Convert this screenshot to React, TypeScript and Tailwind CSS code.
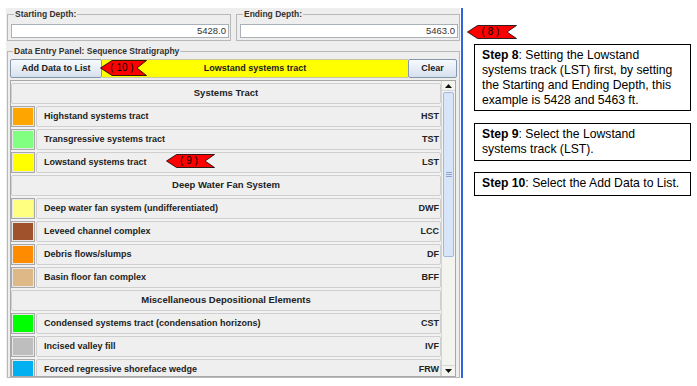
import React from 'react';

type Item = { color: string; name: string; code: string };
type Section = { title: string; items: Item[] };

const SECTIONS: Section[] = [
  {
    title: 'Systems Tract',
    items: [
      { color: '#ffa500', name: 'Highstand systems tract', code: 'HST' },
      { color: '#80ff80', name: 'Transgressive systems tract', code: 'TST' },
      { color: '#ffff00', name: 'Lowstand systems tract', code: 'LST' },
    ],
  },
  {
    title: 'Deep Water Fan System',
    items: [
      { color: '#ffff80', name: 'Deep water fan system (undifferentiated)', code: 'DWF' },
      { color: '#a0522d', name: 'Leveed channel complex', code: 'LCC' },
      { color: '#ff8c00', name: 'Debris flows/slumps', code: 'DF' },
      { color: '#deb887', name: 'Basin floor fan complex', code: 'BFF' },
    ],
  },
  {
    title: 'Miscellaneous Depositional Elements',
    items: [
      { color: '#00ff00', name: 'Condensed systems tract (condensation horizons)', code: 'CST' },
      { color: '#bebebe', name: 'Incised valley fill', code: 'IVF' },
      { color: '#00b0f0', name: 'Forced regressive shoreface wedge', code: 'FRW' },
    ],
  },
];

function RedTag({ label, className, w, h }: { label: string; className: string; w: number; h: number }) {
  const pts = `0.5,${h / 2} ${h * 0.75},0.5 ${w - 0.5},0.5 ${w - 10},${h / 2} ${w - 0.5},${h - 0.5} ${h * 0.75},${h - 0.5}`;
  return (
    <div className={`absolute flex items-center justify-center ${className}`}>
      <svg width={w} height={h} viewBox={`0 0 ${w} ${h}`} className="absolute inset-0">
        <polygon points={pts} fill="#ff0000" stroke="#000" strokeWidth="0.8" />
      </svg>
      <span className="relative pr-[3px] text-[10px] leading-none whitespace-pre text-black">{label}</span>
    </div>
  );
}

function DepthField({ title, value }: { title: string; value: string }) {
  return (
    <fieldset className="w-[224px] border border-[#b8b8b8] pl-[3px] pr-[1px] pt-[5px] pb-[2px]">
      <legend className="ml-[3px] px-[1px] text-[8.5px] leading-[10px] font-bold text-[#333]">{title}</legend>
      <input
        readOnly
        value={value}
        className="block w-full h-[14px] bg-white border border-[#a9b0b8] text-right pr-[2px] text-[9.5px] text-[#333] outline-none"
      />
    </fieldset>
  );
}

function Arrow({ up }: { up?: boolean }) {
  return (
    <svg width="7" height="4" viewBox="0 0 7 4">
      <polygon points={up ? '0,4 3.5,0 7,4' : '0,0 3.5,4 7,0'} fill="#111" />
    </svg>
  );
}

export default function App() {
  return (
    <div className="relative w-[697px] h-[386px] bg-white flex overflow-hidden font-['Liberation_Sans',Arial,sans-serif] text-black">
      {/* swing panel */}
      <div className="ml-[6px] mt-[8px] w-[454px] h-[370px] bg-[#eeeeee] flex flex-col">
        <div className="flex gap-[5px] pl-[1px] mt-[1px]">
          <DepthField title="Starting Depth:" value="5428.0" />
          <DepthField title="Ending Depth:" value="5463.0" />
        </div>

        <fieldset className="mt-[5px] ml-[1px] w-[453px] flex-1 min-h-0 border border-[#b8b8b8] pl-[2px] pr-[1px] pt-[3px] flex flex-col">
          <legend className="ml-[3px] px-[1px] text-[8.5px] leading-[10px] font-bold text-[#333]">
            Data Entry Panel: Sequence Stratigraphy
          </legend>

          <div className="flex h-[19px] text-[9px] font-bold text-[#1a1a1a]">
            <button className="w-[92px] border border-[#8797ab] rounded-[2px] bg-gradient-to-b from-[#f7fafd] to-[#d6e1ee]">
              Add Data to List
            </button>
            <div className="w-[306px] bg-[#ffff00] border-y border-[#c8c8a0] flex items-center justify-center">
              Lowstand systems tract
            </div>
            <button className="w-[49px] border border-[#8797ab] rounded-[2px] bg-gradient-to-b from-[#f7fafd] to-[#d6e1ee]">
              Clear
            </button>
          </div>

          <div className="mt-[2px] w-[446px] flex-1 min-h-0 border border-[#a8a8a8] bg-[#f2f2f2] flex overflow-hidden">
            <div className="flex-1 min-w-0 flex flex-col pt-[1px]">
              {SECTIONS.map((s) => (
                <React.Fragment key={s.title}>
                  <div className="shrink-0 h-[23px] py-[1px]">
                    <div className="h-full border border-[#cfcfcf] rounded-[2px] bg-[#efefef] flex items-center justify-center text-[9.5px] font-bold text-[#222]">
                      {s.title}
                    </div>
                  </div>
                  {s.items.map((it) => (
                    <div key={it.code} className="shrink-0 h-[23px] py-[1px] flex gap-[1px]">
                      <div className="w-[24px] border border-[#a8a8a8] p-[1px] bg-[#e8e8e8]">
                        <div className="w-full h-full" style={{ backgroundColor: it.color }} />
                      </div>
                      <div className="flex-1 border border-[#cfcfcf] rounded-[2px] bg-[#efefef] flex items-center justify-between pl-[7px] pr-[1px] text-[9px] font-bold text-[#222]">
                        <span>{it.name}</span>
                        <span>{it.code}</span>
                      </div>
                    </div>
                  ))}
                </React.Fragment>
              ))}
            </div>

            {/* scrollbar */}
            <div className="w-[14px] border-l border-[#d4d4d4] bg-[#f3f3ef] flex flex-col">
              <div className="h-[10px] flex items-center justify-center border-b border-[#d8d8d8]">
                <Arrow up />
              </div>
              <div className="flex-1 relative px-[1px]">
                <div className="mt-[1px] h-[165px] rounded-[2px] border border-[#a3b8e0] bg-[#d8e4f8] flex flex-col items-center justify-center gap-[1px]">
                  <div className="w-[6px] h-[1px] bg-[#8ca4d4]" />
                  <div className="w-[6px] h-[1px] bg-[#8ca4d4]" />
                  <div className="w-[6px] h-[1px] bg-[#8ca4d4]" />
                </div>
              </div>
              <div className="h-[11px] flex items-center justify-center border-t border-[#d8d8d8]">
                <Arrow />
              </div>
            </div>
          </div>
        </fieldset>
      </div>

      <div className="ml-[1px] mt-[8px] w-[2px] h-[370px] bg-[#2f64de]" />

      {/* instructions */}
      <div className="ml-[11px] pt-[44px] flex flex-col text-[12.2px] leading-[15px] whitespace-nowrap">
        <div className="w-[217px] h-[67px] border border-black pl-[7px] pt-[3px]">
          <b>Step 8</b>: Setting the Lowstand
          <br />
          systems track (LST) first, by setting
          <br />
          the Starting and Ending Depth, this
          <br />
          example is 5428 and 5463 ft.
        </div>
        <div className="mt-[12px] w-[217px] h-[38px] border border-black pl-[7px] pt-[3px]">
          <b>Step 9</b>: Select the Lowstand
          <br />
          systems track (LST).
        </div>
        <div className="mt-[11px] w-[217px] h-[24px] border border-black pl-[7px] pt-[3px]">
          <b>Step 10</b>: Select the Add Data to List.
        </div>
      </div>

      <RedTag label="( 10 )" className="left-[100px] top-[60px] w-[47px] h-[16px]" w={47} h={16} />
      <RedTag label="( 9 )" className="left-[166px] top-[154px] w-[49px] h-[14px]" w={49} h={14} />
      <RedTag label="( 8 )" className="left-[467px] top-[25px] w-[50px] h-[14px]" w={50} h={14} />
    </div>
  );
}
